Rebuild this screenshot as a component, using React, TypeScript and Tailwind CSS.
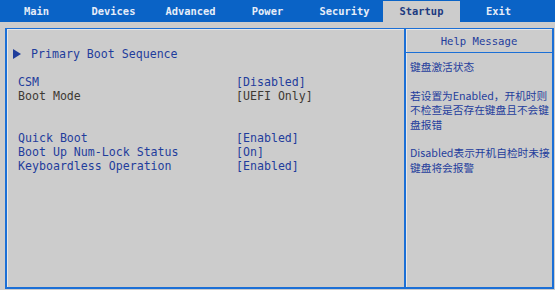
import React from 'react';

const tabs = ['Main', 'Devices', 'Advanced', 'Power', 'Security', 'Startup', 'Exit'];

interface Row {
  label: string;
  value: string;
  dim?: boolean;
}

const groupA: Row[] = [
  { label: 'CSM', value: '[Disabled]' },
  { label: 'Boot Mode', value: '[UEFI Only]', dim: true },
];

const groupB: Row[] = [
  { label: 'Quick Boot', value: '[Enabled]' },
  { label: 'Boot Up Num-Lock Status', value: '[On]' },
  { label: 'Keyboardless Operation', value: '[Enabled]' },
];

const mono = { fontFamily: '"DejaVu Sans Mono", "Liberation Mono", monospace' };

const SettingRow: React.FC<{ row: Row }> = ({ row }) => (
  <div className={`flex h-[14px] items-center ${row.dim ? 'text-[#3e3a34]' : 'text-[#1f3d9c]'}`}>
    <span className="w-[218px] whitespace-pre">{row.label}</span>
    <span className="whitespace-pre">{row.value}</span>
  </div>
);

const App: React.FC = () => {
  return (
    <div className="w-[555px] h-[290px] bg-[#cccccc] overflow-hidden">
      {/* Menu bar */}
      <div className="h-[22px] bg-[#0a63c6] flex pt-px">
        <div className="flex -ml-[2px]">
          {tabs.map((t) => (
            <div
              key={t}
              style={mono}
              className={`w-[77px] h-[21px] flex items-center justify-center text-[10.4px] font-bold ${
                t === 'Startup' ? 'bg-[#cccccc] text-[#1c3a80]' : 'text-[#e6edf8]'
              }`}
            >
              {t}
            </div>
          ))}
        </div>
      </div>

      {/* Frame */}
      <div className="ml-[5px] mt-[6px] w-[549px] h-[261px] flex border-t border-b-2 border-l-2 border-r-2 border-[#1b6fd6] shadow-[inset_1px_1px_0_#e8e8e8]">
        {/* Settings panel */}
        <div style={mono} className="w-[397px] text-[11.6px] leading-[14px]">
          <div className="mt-[18px] flex h-[14px] items-center text-[#1f3d9c]">
            <svg width="8" height="10" viewBox="0 0 8 10" className="ml-[6px]">
              <polygon points="0,0 8,5 0,10" fill="#1f3d9c" />
            </svg>
            <span className="ml-[10px]">Primary Boot Sequence</span>
          </div>

          <div className="mt-[14px] pl-[11px]">
            {groupA.map((r) => (
              <SettingRow key={r.label} row={r} />
            ))}
          </div>

          <div className="mt-[28px] pl-[11px]">
            {groupB.map((r) => (
              <SettingRow key={r.label} row={r} />
            ))}
          </div>
        </div>

        {/* Help panel */}
        <div className="w-[148px] border-l-2 border-[#1b6fd6] shadow-[inset_1px_0_0_#e8e8e8]">
          <div
            style={mono}
            className="h-[24px] pt-[3px] flex items-center justify-center border-b border-[#1b6fd6] text-[10.6px] text-[#1f3d9c]"
          >
            Help Message
          </div>
          <div
            style={{ fontFamily: '"Noto Sans CJK SC", "Noto Sans", sans-serif' }}
            className="pl-[4px] pt-[7px] text-[10.7px] leading-[14.4px] text-[#1f3d9c]"
          >
            <div>键盘激活状态</div>
            <div className="h-[14.4px]" />
            <div>若设置为Enabled，开机时则</div>
            <div>不检查是否存在键盘且不会键</div>
            <div>盘报错</div>
            <div className="h-[14.4px]" />
            <div>Disabled表示开机自检时未接</div>
            <div>键盘将会报警</div>
          </div>
        </div>
      </div>
    </div>
  );
};

export default App;
